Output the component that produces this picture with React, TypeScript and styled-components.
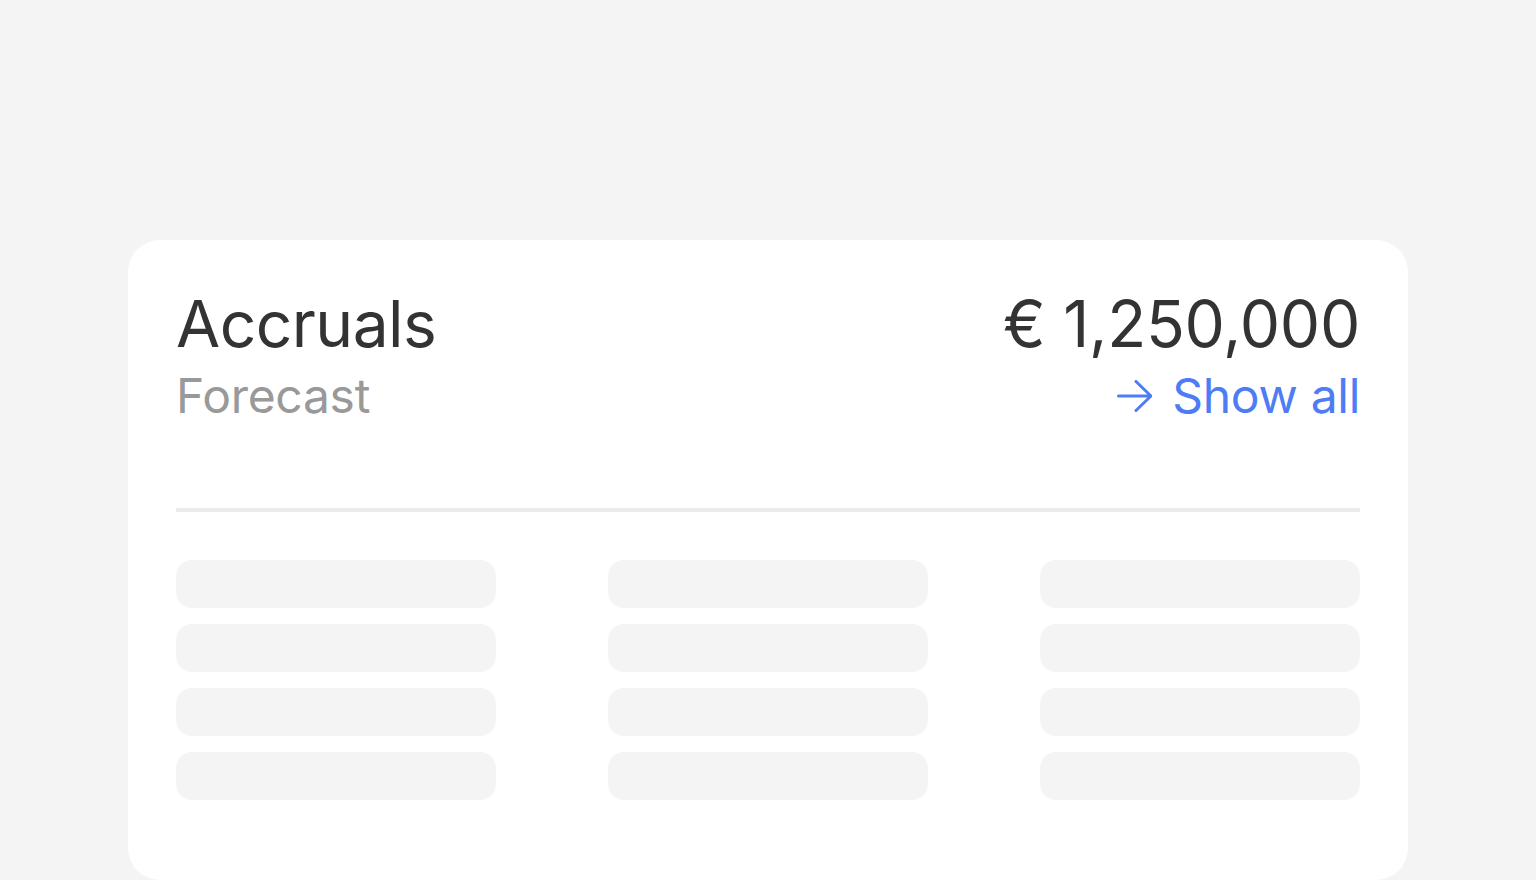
import React from 'react';
import styled, { createGlobalStyle } from 'styled-components';

const GlobalStyle = createGlobalStyle`
  html, body {
    margin: 0;
    padding: 0;
    background: #f4f4f4;
    font-family: Inter, "Noto Sans", sans-serif;
  }
`;

const Page = styled.div`
  padding: 240px 128px 0 128px;
  height: 880px;
  box-sizing: border-box;
  overflow: hidden;
`;

const Card = styled.section`
  background: #ffffff;
  border-radius: 32px;
  padding: 48px 48px 80px 48px;
  min-height: 640px;
  box-sizing: border-box;
`;

const Header = styled.div`
  display: flex;
  justify-content: space-between;
  align-items: flex-start;
`;

const Column = styled.div<{ $align?: 'left' | 'right' }>`
  display: flex;
  flex-direction: column;
  align-items: ${(p) => (p.$align === 'right' ? 'flex-end' : 'flex-start')};
`;

const Title = styled.h2<{ $tight?: boolean }>`
  margin: 0;
  font-size: 64px;
  line-height: 72px;
  font-weight: 400;
  letter-spacing: ${(p) => (p.$tight ? '-0.008em' : '-0.004em')};
  color: #333333;
`;

const Subtitle = styled.p`
  margin: 0;
  font-size: 48px;
  line-height: 72px;
  font-weight: 400;
  letter-spacing: -0.006em;
  color: #999999;
`;

const ShowAll = styled.a`
  display: inline-flex;
  align-items: center;
  gap: 20px;
  font-size: 48px;
  line-height: 72px;
  letter-spacing: -0.006em;
  color: #4d7cf5;
  text-decoration: none;
  cursor: pointer;
`;

const Divider = styled.hr`
  margin: 76px 0 48px 0;
  border: none;
  height: 4px;
  background: #ebebeb;
`;

const SkeletonGrid = styled.div`
  display: grid;
  grid-template-columns: repeat(3, 320px);
  justify-content: space-between;
  row-gap: 16px;
`;

const SkeletonBar = styled.div`
  height: 48px;
  border-radius: 16px;
  background: #f4f4f4;
`;

function ArrowIcon() {
  return (
    <svg width="36" height="32" viewBox="0 0 36 32" fill="none">
      <path d="M2.5 16H35M20 1.5L35 16L20 30.5" stroke="currentColor" strokeWidth="3" strokeLinecap="round" strokeLinejoin="round" />
    </svg>
  );
}

export default function App() {
  const bars = Array.from({ length: 12 });

  return (
    <>
      <GlobalStyle />
      <Page>
        <Card>
          <Header>
            <Column>
              <Title $tight>Accruals</Title>
              <Subtitle>Forecast</Subtitle>
            </Column>
            <Column $align="right">
              <Title>€ 1,250,000</Title>
              <ShowAll>
                <ArrowIcon />
                Show all
              </ShowAll>
            </Column>
          </Header>
          <Divider />
          <SkeletonGrid>
            {bars.map((_, i) => (
              <SkeletonBar key={i} />
            ))}
          </SkeletonGrid>
        </Card>
      </Page>
    </>
  );
}
